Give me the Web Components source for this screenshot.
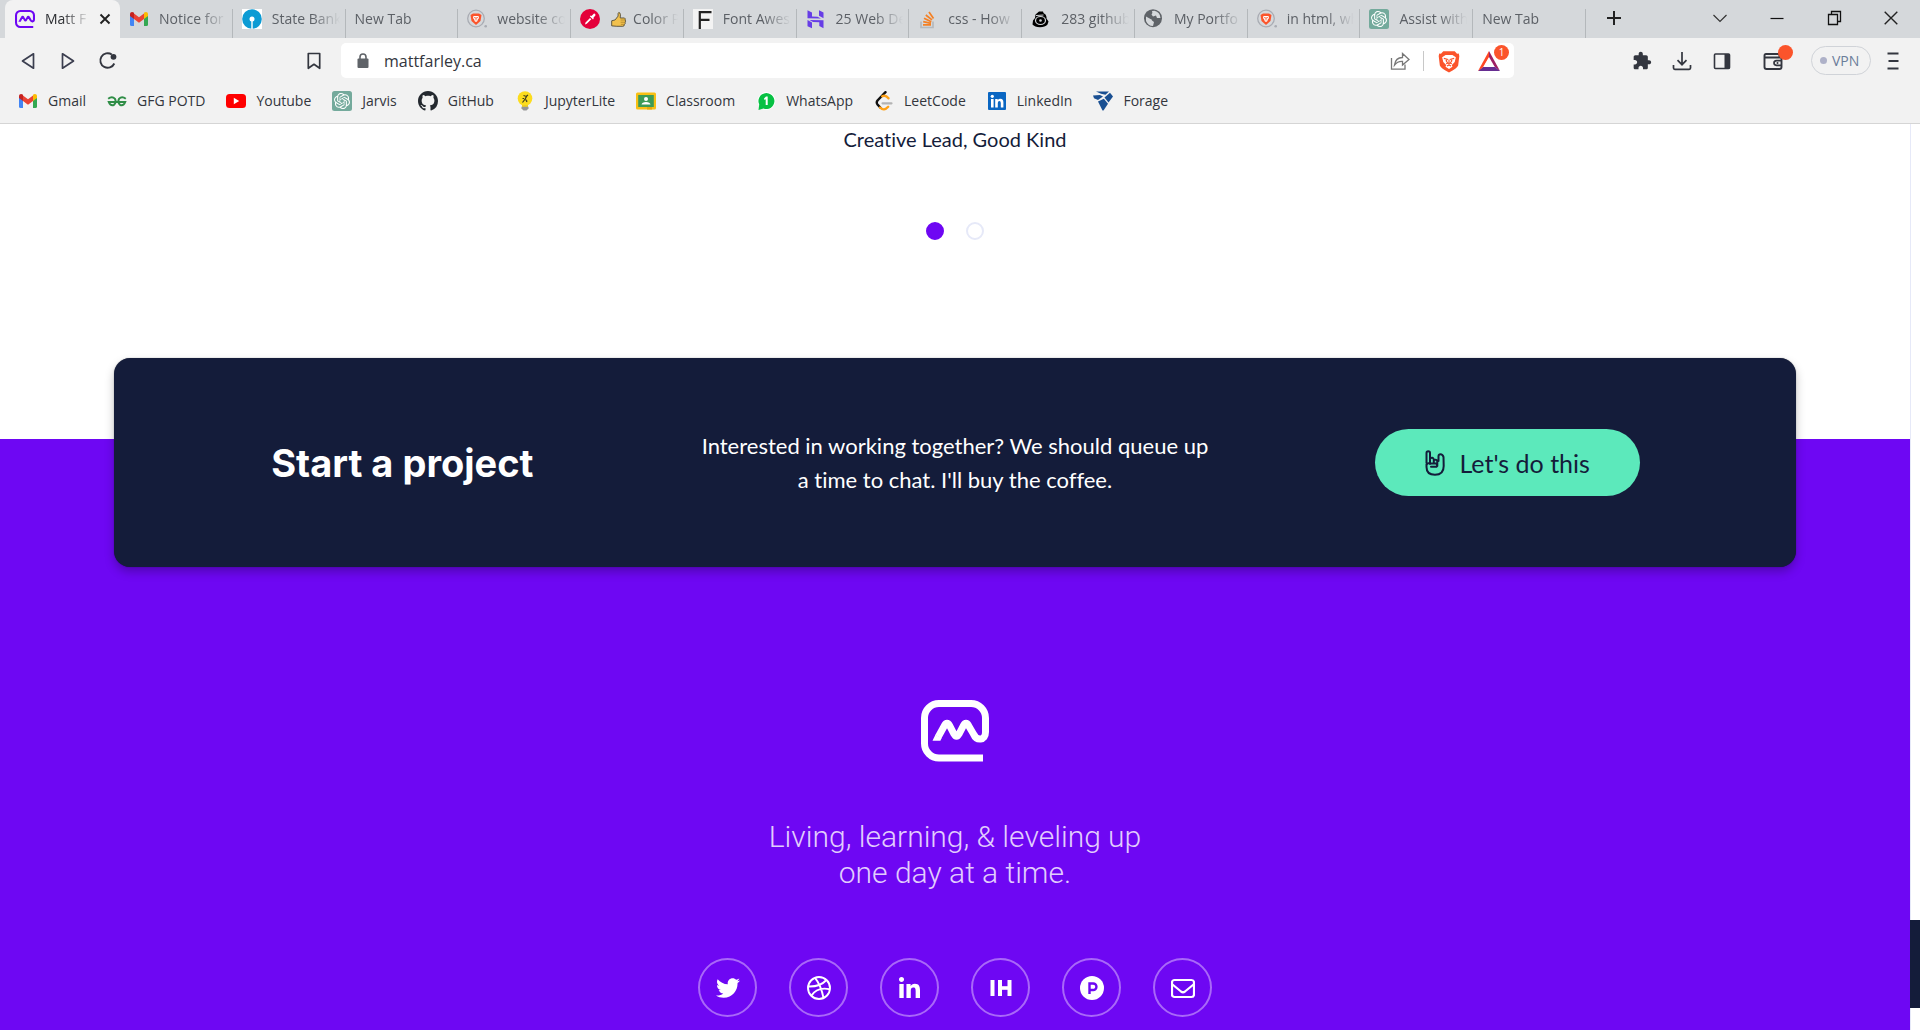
<!DOCTYPE html>
<html lang="en">
<head>
<meta charset="utf-8">
<title>Matt Farley</title>
<style>
  body { margin: 0; background: #fff; font-family: "Open Sans", "Noto Sans", sans-serif; }
</style>
</head>
<body>
<browser-window>
  <tab-strip slot="chrome">
    <browser-tab icon="matt" active>Matt F</browser-tab>
    <browser-tab icon="gmail">Notice for</browser-tab>
    <browser-tab icon="sbi">State Bank</browser-tab>
    <browser-tab>New Tab</browser-tab>
    <browser-tab icon="bravesearch">website co</browser-tab>
    <browser-tab icon="picker" emoji="thumb">Color P</browser-tab>
    <browser-tab icon="fontawesome">Font Awes</browser-tab>
    <browser-tab icon="hostinger">25 Web De</browser-tab>
    <browser-tab icon="stack">css - How</browser-tab>
    <browser-tab icon="eye">283 github</browser-tab>
    <browser-tab icon="globe">My Portfo</browser-tab>
    <browser-tab icon="bravesearch">in html, wh</browser-tab>
    <browser-tab icon="openai">Assist with</browser-tab>
    <browser-tab>New Tab</browser-tab>
  </tab-strip>
  <address-bar slot="chrome" url="mattfarley.ca"></address-bar>
  <bookmark-bar slot="chrome">
    <bookmark-link icon="gmail">Gmail</bookmark-link>
    <bookmark-link icon="gfg">GFG POTD</bookmark-link>
    <bookmark-link icon="youtube">Youtube</bookmark-link>
    <bookmark-link icon="openai">Jarvis</bookmark-link>
    <bookmark-link icon="github">GitHub</bookmark-link>
    <bookmark-link icon="bulb">JupyterLite</bookmark-link>
    <bookmark-link icon="classroom">Classroom</bookmark-link>
    <bookmark-link icon="whatsapp">WhatsApp</bookmark-link>
    <bookmark-link icon="leetcode">LeetCode</bookmark-link>
    <bookmark-link icon="linkedinbox">LinkedIn</bookmark-link>
    <bookmark-link icon="forage">Forage</bookmark-link>
  </bookmark-bar>
  <testimonial-end>Creative Lead, Good Kind</testimonial-end>
  <site-footer>
    <project-card slot="card">
      <span slot="title">Start a project</span>
      <span slot="text">Interested in working together? We should queue up<br>a time to chat. I'll buy the coffee.</span>
      <span slot="action">Let's do this</span>
    </project-card>
    <span slot="tagline">Living, learning, &amp; leveling up<br>one day at a time.</span>
    <social-link slot="social" icon="twitter" label="Twitter"></social-link>
    <social-link slot="social" icon="dribbble" label="Dribbble"></social-link>
    <social-link slot="social" icon="linkedin" label="LinkedIn"></social-link>
    <social-link slot="social" icon="indie" label="Indie Hackers"></social-link>
    <social-link slot="social" icon="product" label="Product Hunt"></social-link>
    <social-link slot="social" icon="mail" label="Email"></social-link>
  </site-footer>
</browser-window>

<script>
const MATT = '<path d="M62 58H18A14.500 14.500 0 0 1 3.500 43.500V18A14.500 14.500 0 0 1 18 3.500H50A14.500 14.500 0 0 1 64.500 18V32C64.500 41 55.500 41 52.500 34L47.500 25.500C46 22.500 44 22.500 42.500 25.500L38 34C36.500 37 34.500 37 33 34L28.500 25.500C27 22.500 25 22.500 23.500 25.500L17.300 36.700" fill="none" stroke="currentColor" stroke-width="7"/><path d="M14.400 34.700L20.600 38L19.400 40.700H11.500Z" fill="currentColor"/>';
const LION = '<path d="M5 2H15L17 4L18.500 3.800L19 6L18 14Q17 16.500 10 20Q3 16.500 2 14L1 6L1.500 3.800L3 4Z" fill="#fb542b"/><path d="M7 5H13L16 7L15 11L12.500 13.500L13 15L10 17L7 15L7.500 13.500L5 11L4 7Z" fill="#fff"/><path d="M5.500 8L8.500 8.700L7.500 10L9 12L7.500 12.500M14.500 8L11.500 8.700L12.500 10L11 12L12.500 12.500M10 9V13M8.200 14.500L10 13.500L11.800 14.500" fill="none" stroke="#fb542b" stroke-width="1"/>';
// Each entry is [viewBox, markup].
const ICONS = {
  matt: ['0 0 68 62', MATT],
  gmail: ['0 0 20 20', '<path d="M1 5V15.500Q1 17 2.500 17H5V9Z" fill="#4285f4"/><path d="M19 5V15.500Q19 17 17.500 17H15V9Z" fill="#34a853"/><path d="M5 10V4.500L10 8.300L15 4.500V10L10 13.800Z" fill="#ea4335"/><path d="M1 7V5.300C1 3 3.300 2.500 5 3.800V10Z" fill="#c5221f"/><path d="M19 7V5.300C19 3 16.700 2.500 15 3.800V10Z" fill="#fbbc04"/>'],
  sbi: ['0 0 20 20', '<path d="M0 0H20V20H0Z" fill="#fff"/><circle cx="10" cy="10" r="9.800" fill="#0c9bd4"/><circle cx="10" cy="10" r="2.500" fill="#fff"/><path d="M9.300 10H10.700V20H9.300Z" fill="#fff"/>'],
  bravesearch: ['0 0 20 20', '<circle cx="9" cy="9.500" r="8.300" fill="none" stroke="#a9acb3" stroke-width="1.300"/><circle cx="18.700" cy="17.300" r="1.300" fill="#a9acb3"/><path d="M6 4.500H12L14.500 6L13.500 12L9 16L4.500 12L3.500 6Z" fill="#fb542b"/><path d="M6.500 7H11.500L12 9L10.500 11V12L9 13L7.500 12V11L6 9Z" fill="#fff"/><path d="M7 8.500L9 9L11 8.500M9 9V11.500" stroke="#fb542b" stroke-width=".8" fill="none"/>'],
  picker: ['0 0 20 20', '<circle cx="10" cy="10" r="10" fill="#e4003a"/><path d="M5 15.500L5.500 13.500L10 9L11.300 10.300L6.800 14.800Z M9.800 7.300L13 10.500L13.800 9.500L13.300 9L15.500 6.300Q15.600 4.500 14 4.600L11.500 6.900L10.800 6.400Z" fill="#fff"/>'],
  thumb: ['0 0 20 20', '<path d="M2 11.500L6 10.500L9.500 6L9.500 3Q10 1 11.500 2.200Q12.800 3.500 12 8.200H17Q18.500 9 17.800 10.500Q19 12 17.800 13.200Q18.300 15 17 15.800Q17 18 15 18H8L2 17.500Z" fill="#f2c14d" stroke="#4a4433" stroke-width="1"/><path d="M12.500 10.600H17.500M12.500 13.200H17.500M12.800 15.700H16.500" stroke="#a37a24" stroke-width=".8"/>'],
  fontawesome: ['0 0 20 20', '<path d="M0 0H20V20H0Z" fill="#f3f3f3"/><path d="M6.800 20V3.200H18.500M6.800 10.800H16.500" fill="none" stroke="#222" stroke-width="2.200"/>'],
  hostinger: ['0 0 20 20', '<g fill="#673de6"><path d="M1.500 9.200V1.300L6 3.500V7.500L11.500 7.700L15 9.600Z"/><path d="M13 6.800V1.200L17.500 3.500V9.200Z"/><path d="M1.500 17.300V11L6 13.500V19.200Z"/><path d="M17.500 11.200V19.200L13.300 17V13.200L7 13.100L3.500 11Z"/></g>'],
  stack: ['0 0 20 20', '<path d="M3 12.500V18.500H15V12.500" fill="none" stroke="#b5b9bd" stroke-width="1.700"/><path d="M5 15.800H13M5.200 12.700L13 14.300M6 9.300L13.300 12.700M7.800 6L14 10.900M11 3L15.500 9.500" stroke="#f48024" stroke-width="1.700"/>'],
  eye: ['0 0 20 20', '<path d="M4.500 5.500L8 2.500L12 2.500L12.500 4Q15.500 5.500 15.500 8L15.500 9.500L17.500 12.500L16.500 15.500Q14 18.200 9 18.200Q3.500 18 1.500 15.500L2 11.500L4 9Z" fill="#000"/><ellipse cx="9.500" cy="11.500" rx="5" ry="4" fill="none" stroke="#d5d8db" stroke-width="1.200"/><circle cx="9.500" cy="11.500" r="1.300" fill="#d5d8db"/><path d="M5 6.500L12.500 6" stroke="#d5d8db"/>'],
  globe: ['0 0 20 20', '<circle cx="9" cy="9.200" r="9" fill="#5f6368"/><path d="M2 7.500L6.500 10Q8 10 8 11.500L10 13L9 17Q4 17 2 12Z M8 2Q9 4 7.500 5.500L9 7.500L12 6.500L13 9H16.500Q16 3 10.500 1.800Z" fill="#d5d8db"/>'],
  openai: ['0 0 20 20', '<rect width="20" height="20" rx="2.500" fill="#74aa9c"/><path transform="translate(2 2) scale(.667)" fill="#fff" d="M22.2819 9.8211a5.9847 5.9847 0 0 0-.5157-4.9108 6.0462 6.0462 0 0 0-6.5098-2.9A6.0651 6.0651 0 0 0 4.9807 4.1818a5.9847 5.9847 0 0 0-3.9977 2.9 6.0462 6.0462 0 0 0 .7427 7.0966 5.98 5.98 0 0 0 .511 4.9107 6.051 6.051 0 0 0 6.5146 2.9001A5.9847 5.9847 0 0 0 13.2599 24a6.0557 6.0557 0 0 0 5.7718-4.2058 5.9894 5.9894 0 0 0 3.9977-2.9001 6.0557 6.0557 0 0 0-.7475-7.0729zm-9.022 12.6081a4.4755 4.4755 0 0 1-2.8764-1.0408l.1419-.0804 4.7783-2.7582a.7948.7948 0 0 0 .3927-.6813v-6.7369l2.02 1.1686a.071.071 0 0 1 .038.052v5.5826a4.504 4.504 0 0 1-4.4945 4.4944zm-9.6607-4.1254a4.4708 4.4708 0 0 1-.5346-3.0137l.142.0852 4.783 2.7582a.7712.7712 0 0 0 .7806 0l5.8428-3.3685v2.3324a.0804.0804 0 0 1-.0332.0615L9.74 19.9502a4.4992 4.4992 0 0 1-6.1408-1.6464zM2.3408 7.8956a4.485 4.485 0 0 1 2.3655-1.9728V11.6a.7664.7664 0 0 0 .3879.6765l5.8144 3.3543-2.0201 1.1685a.0757.0757 0 0 1-.071 0l-4.8303-2.7865A4.504 4.504 0 0 1 2.3408 7.872zm16.5963 3.8558L13.1038 8.364 15.1192 7.2a.0757.0757 0 0 1 .071 0l4.8303 2.7913a4.4944 4.4944 0 0 1-.6765 8.1042v-5.6772a.79.79 0 0 0-.407-.667zm2.0107-3.0231l-.142-.0852-4.7735-2.7818a.7759.7759 0 0 0-.7854 0L9.409 9.2297V6.8974a.0662.0662 0 0 1 .0284-.0615l4.8303-2.7866a4.4992 4.4992 0 0 1 6.6802 4.66zM8.3065 12.863l-2.02-1.1638a.0804.0804 0 0 1-.038-.0567V6.0742a4.4992 4.4992 0 0 1 7.3757-3.4537l-.142.0805L8.704 5.459a.7948.7948 0 0 0-.3927.6813zm1.0976-2.3654l2.602-1.4998 2.6069 1.4998v2.9994l-2.5974 1.4997-2.6067-1.4997Z"/>'],
  gfg: ['0 0 20 20', '<path d="M1.200 7.700Q5 4.800 7.800 7.600Q10 11.500 6.800 14Q3.300 15 1.800 11H18.200Q16.700 15 13.200 14Q10 11.500 12.200 7.600Q15 4.800 18.800 7.700" fill="none" stroke="#2f8d46" stroke-width="2"/>'],
  youtube: ['0 0 20 20', '<rect y="3" width="20" height="14" rx="3.500" fill="#f00"/><path d="M7.800 6.800L13.200 10L7.800 13.200Z" fill="#fff"/>'],
  github: ['0 0 16 16', '<path fill="#24292f" d="M8 0C3.580 0 0 3.580 0 8c0 3.540 2.290 6.530 5.470 7.590.4.070.55-.17.55-.38 0-.19-.01-.82-.01-1.490-2.010.37-2.530-.49-2.690-.94-.09-.23-.48-.94-.82-1.130-.28-.15-.68-.52-.01-.53.63-.01 1.080.58 1.230.82.72 1.210 1.870.87 2.330.66.070-.52.28-.87.51-1.070-1.780-.2-3.640-.89-3.640-3.950 0-.87.31-1.590.82-2.150-.08-.2-.36-1.020.08-2.120 0 0 .67-.21 2.200.82.64-.18 1.320-.27 2-.27s1.360.09 2 .27c1.530-1.040 2.200-.82 2.200-.82.44 1.100.16 1.920.08 2.120.51.56.82 1.270.82 2.150 0 3.070-1.870 3.750-3.650 3.950.29.25.54.73.54 1.480 0 1.070-.01 1.930-.01 2.200 0 .21.15.46.55.38A8.010 8.010 0 0 0 16 8c0-4.420-3.580-8-8-8z"/>'],
  bulb: ['0 0 20 20', '<circle cx="10" cy="7.500" r="7.300" fill="#fcdc1e"/><path d="M7 14H13V16H7Z" fill="#f0cf20"/><path d="M6.500 15.800H13.500V17.500L11.500 19.500H8.500L6.500 17.500Z" fill="#969696"/><path d="M8.500 4.500L11.500 5.500L9.800 8.500L12 9.500M12 9.500L11.500 11M9.800 8.500L7.500 11.500M11.500 5L13 4M7.500 7.500L9 7.500" fill="none" stroke="#3c3a20" stroke-width="1.200"/>'],
  classroom: ['0 0 20 20', '<rect y="1.500" width="20" height="17" rx="1.500" fill="#f8c013"/><rect x="2.200" y="4" width="15.600" height="12" fill="#3d9b57"/><circle cx="10" cy="8" r="2" fill="#fff"/><path d="M5.500 13.500Q6 11 10 11Q14 11 14.500 13.500Z" fill="#fff"/><path d="M11 16H16V18.500H11Z" fill="#e5a90b"/>'],
  whatsapp: ['0 0 20 20', '<circle cx="10.500" cy="10" r="9" fill="#fff"/><path d="M2.500 19L3.200 13.500A8 8 0 1 1 7.500 17.500Z" fill="#07c143"/><path d="M8 7.500L10 5.500H11.700V14H9.700V8.200L8.500 9Z" fill="#fff"/>'],
  leetcode: ['0 0 20 20', '<path d="M11.500 1.200L3.500 9.500Q2 11.500 3.500 13.500L6.500 16.700" fill="none" stroke="#111" stroke-width="2.400" stroke-linecap="round"/><path d="M6 16.500Q10 20.500 14.200 15.800M8.200 5.200Q11.500 3.500 14.500 7.300" fill="none" stroke="#ffa116" stroke-width="2.400" stroke-linecap="round"/><path d="M8.500 12.300H17.500" stroke="#b3b3b3" stroke-width="2.200" stroke-linecap="round"/>'],
  linkedinbox: ['0 0 20 20', '<rect x="1" y="1" width="18" height="18" rx="1" fill="#0a66c2"/><circle cx="5.300" cy="5.300" r="1.600" fill="#fff"/><path d="M4 8H6.600V16.500H4ZM8.200 8H10.700V9.200Q11.500 7.800 13.500 7.800Q16.400 7.800 16.400 11.500V16.500H13.800V12Q13.800 10 12.400 10Q10.800 10 10.800 12V16.500H8.200Z" fill="#fff"/>'],
  forage: ['0 0 20 20', '<g fill="#194f92"><path d="M3 .5H16L12.500 3.700L8 2.800Z"/><path d="M0 4.500L7 3.900L10 5.500L5 9L1 7.300Z"/><path d="M17 1.800L20 5.500L15.500 11.500L11.500 6.500Z"/><path d="M5 10.500L10.800 7.800L15 12.800L10.500 19.500H9.500Z"/></g>'],
  back: ['0 0 20 20', '<path d="M15.500 2.800V17.200L4.500 10Z" fill="none" stroke="#3b3e4f" stroke-width="1.700" stroke-linejoin="round"/>'],
  forward: ['0 0 20 20', '<path d="M4.500 2.800V17.200L15.500 10Z" fill="none" stroke="#3b3e4f" stroke-width="1.700" stroke-linejoin="round"/>'],
  reload: ['0 0 20 20', '<path d="M13.800 3.500A7.300 7.300 0 1 0 16.300 12.500" fill="none" stroke="#33363f" stroke-width="1.900"/><circle cx="15.500" cy="5.800" r="2.900" fill="#33363f"/>'],
  bookmark: ['0 0 20 20', '<path d="M4.300 2.500H15.700V17.300L10 13.300L4.300 17.300Z" fill="none" stroke="#33363f" stroke-width="1.700" stroke-linejoin="round"/>'],
  lock: ['0 0 20 20', '<rect x="4.500" y="7.500" width="11" height="9.500" rx="1" fill="#5f6368"/><path d="M7 8V6A3 3 0 0 1 13 6V8" fill="none" stroke="#5f6368" stroke-width="1.600"/>'],
  share: ['0 0 20 20', '<path d="M1.500 7V18.200H15V13.500" fill="none" stroke="#777" stroke-width="1.300"/><path d="M4.500 14Q5.500 6.500 12.500 6.500V2.500L19 8.500L12.500 14V10.300Q7.500 10 4.500 14Z" fill="none" stroke="#777" stroke-width="1.300"/>'],
  brave: ['0 0 20 22', '<g transform="translate(-.5 0) scale(1.050 1.080)">' + LION + '</g>'],
  bat: ['0 0 22 20', '<path d="M11 0L22 20L11 11.500Z" fill="#9e1f63"/><path d="M0 20H22L16.500 15.500H5.500Z" fill="#662d91"/><path d="M11 0V6.500L5.500 16L0 20Z" fill="#ff4724"/><path d="M11 6L16.800 16H5.200Z" fill="#fff"/>'],
  puzzle: ['0 0 24 24', '<path fill="#33363f" d="M20.500 11H19V7c0-1.100-.9-2-2-2h-4V3.500C13 2.120 11.880 1 10.500 1S8 2.120 8 3.500V5H4c-1.100 0-1.990.9-1.990 2v3.800H3.500c1.490 0 2.700 1.210 2.700 2.700s-1.210 2.700-2.700 2.700H2V20c0 1.100.9 2 2 2h3.800v-1.500c0-1.490 1.210-2.700 2.700-2.700 1.490 0 2.700 1.210 2.700 2.700V22H17c1.100 0 2-.9 2-2v-4h1.500c1.380 0 2.500-1.120 2.500-2.500S21.880 11 20.500 11z"/>'],
  download: ['0 0 20 20', '<path d="M10 1V13.500M5.500 9.200L10 13.700L14.500 9.200M1.500 14V17Q1.500 18.300 2.800 18.300H17.200Q18.500 18.300 18.500 17V14" fill="none" stroke="#33363f" stroke-width="1.700"/>'],
  panel: ['0 0 20 20', '<rect x="2.500" y="3" width="15" height="14.500" rx="1" fill="none" stroke="#33363f" stroke-width="1.600"/><path d="M12.500 3H18V17.500H12.500Z" fill="#33363f"/>'],
  wallet: ['0 0 20 20', '<path d="M16.500 6.500V4.500Q16.500 3 15 3H3Q1.500 3 1.500 4.500V16Q1.500 18 3.500 18H16.500Q18.500 18 18.500 16V6.500H2" fill="none" stroke="#33363f" stroke-width="1.900"/><path d="M19 9.700H13.500Q11 9.900 11 12Q11 14.100 13.500 14.300H19" fill="none" stroke="#33363f" stroke-width="1.700"/><circle cx="14.500" cy="12" r="1" fill="#33363f"/>'],
  menu: ['0 0 20 20', '<path d="M4.500 2.500H15.500M5.500 10H15.500M4.500 17.500H15.500" stroke="#33363f" stroke-width="1.900"/>'],
  plus: ['0 0 20 20', '<path d="M10 3V17M3 10H17" stroke="#222" stroke-width="2"/>'],
  chevron: ['0 0 20 20', '<path d="M3.500 7L10 13.500L16.500 7" fill="none" stroke="#333" stroke-width="1.200"/>'],
  minimise: ['0 0 20 20', '<path d="M3.500 10.500H16.500" stroke="#111" stroke-width="1.200"/>'],
  restore: ['0 0 20 20', '<path d="M4.500 6.500H13.500V16.500H4.500ZM7.500 6V3.500H16.500V13.500H14" fill="none" stroke="#111" stroke-width="1.300"/>'],
  close: ['0 0 20 20', '<path d="M3.700 3.700L16.300 16.300M16.300 3.700L3.700 16.300" stroke="#222" stroke-width="1.400"/>'],
  tabclose: ['0 0 20 20', '<path d="M5.500 5.500L14.500 14.500M14.500 5.500L5.500 14.500" stroke="#222" stroke-width="1.900"/>'],
  horns: ['0 0 20 26', '<path d="M1.500 13V3Q1.500 1.200 3.200 1.200Q5 1.200 5 3V10.500M5 8.500Q7.800 6.500 8.800 9.500V11M9 10Q11.700 9 12.300 11.500V16M13.500 11V6Q13.700 4.200 15.400 4.200Q17.800 4.200 18.500 7L18.700 16Q18.700 24.800 10 24.800Q1.500 24.800 1.500 17V14.500Q4 12 6 13.500H11Q13 14.500 11.500 16.800H6M5 10V14M8.800 11V13.500" fill="none" stroke="#141c3a" stroke-width="2" stroke-linecap="round"/>'],
  twitter: ['0 0 512 512', '<path fill="#fff" d="M459.370 151.716c.325 4.548.325 9.097.325 13.645 0 138.720-105.583 298.558-298.558 298.558-59.452 0-114.680-17.219-161.137-47.106 8.447.974 16.568 1.299 25.340 1.299 49.055 0 94.213-16.568 130.274-44.832-46.132-.975-84.792-31.188-98.112-72.772 6.498.974 12.995 1.624 19.818 1.624 9.421 0 18.843-1.300 27.614-3.573-48.081-9.747-84.143-51.980-84.143-102.985v-1.299c13.969 7.797 30.214 12.670 47.431 13.319-28.264-18.843-46.781-51.005-46.781-87.391 0-19.492 5.197-37.360 14.294-52.954 51.655 63.675 129.300 105.258 216.365 109.807-1.624-7.797-2.599-15.918-2.599-24.040 0-57.828 46.782-104.934 104.934-104.934 30.213 0 57.502 12.670 76.670 33.137 23.715-4.548 46.456-13.320 66.599-25.340-7.798 24.366-24.366 44.833-46.132 57.827 21.117-2.273 41.584-8.122 60.426-16.243-14.292 20.791-32.161 39.308-52.628 54.253z"/>'],
  dribbble: ['0 0 24 24', '<g fill="none" stroke="#fff" stroke-width="1.900"><circle cx="12" cy="12" r="11"/><path d="M8 1.800Q14 9 16.500 22M1.200 10.500Q13 11 19.500 4M4.300 19.800Q10 10.500 22.800 13.200"/></g>'],
  linkedin: ['0 0 448 448', '<path fill="#fff" d="M100.280 448H7.400V148.900h92.880zM53.790 108.100C24.090 108.100 0 83.500 0 53.800a53.790 53.790 0 0 1 107.580 0c0 29.700-24.100 54.300-53.790 54.300zM447.900 448h-92.680V302.400c0-34.700-.7-79.200-48.290-79.200-48.290 0-55.690 37.700-55.690 76.700V448h-92.780V148.900h89.080v40.800h1.300c12.400-23.500 42.690-48.300 87.880-48.300 94 0 111.280 61.900 111.280 142.300V448z"/>'],
  indie: ['0 0 24 24', '<g fill="#fff"><rect x="1.500" y="4" width="4" height="16"/><rect x="9" y="4" width="4" height="16"/><rect x="18.500" y="4" width="4" height="16"/><rect x="12" y="10.200" width="7" height="3.600"/></g>'],
  product: ['0 0 24 24', '<circle cx="12" cy="12" r="12" fill="#fff"/><path d="M9.500 18V7.500H13.200A3.200 3.200 0 0 1 13.200 14H9.500" fill="none" stroke="#6e07f3" stroke-width="2.400"/>'],
  mail: ['0 0 24 24', '<rect x="1" y="4" width="22" height="17" rx="2.500" fill="none" stroke="#fff" stroke-width="2.200"/><path d="M1.500 8.500L10 15.500Q12 17 14 15.500L22.500 8.500" fill="none" stroke="#fff" stroke-width="2.200"/>']
};

// Base class: puts styles and markup into an open shadow root.
class Part extends HTMLElement {
  connectedCallback() {
    if (this.shadowRoot) return;
    this.attachShadow({ mode: 'open' }).innerHTML = '<style>*{box-sizing:border-box}' + this.css() + '</style>' + this.html();
  }
}

customElements.define('ui-icon', class extends Part {
  css() { return ':host{display:block;flex:none;width:20px;height:20px}svg{display:block;width:100%;height:100%}'; }
  html() {
    const [box, body] = ICONS[this.getAttribute('name')];
    return `<svg viewBox="${box}" aria-hidden="true">${body}</svg>`;
  }
});

customElements.define('icon-button', class extends Part {
  css() { return `:host{display:block;flex:none;width:40px;height:36px}
    button{display:flex;align-items:center;justify-content:center;width:100%;height:100%;padding:0;border:0;background:none}
    .brave{width:22px;height:24px}`; }
  html() { const i = this.getAttribute('icon'); return `<button type="button" aria-label="${this.getAttribute('label')}"><ui-icon class="${i}" name="${i}"></ui-icon></button>`; }
});

customElements.define('browser-window', class extends Part {
  css() { return `:host{display:flex;flex-direction:column;height:100vh;overflow:hidden}
    header{flex:none;background:#f2f2f2;border-bottom:1px solid #d5d5d5}
    .view{flex:1;min-height:0;display:flex}
    main{flex:1;min-width:0;overflow:hidden}
    .scroll{flex:none;width:10px;display:flex;flex-direction:column;justify-content:flex-end;padding-bottom:22px;background:#fff;box-shadow:inset 1px 0 #e6e9f8}
    .thumb{height:88px;background:#141c3a}`; }
  html() { return `<header><slot name="chrome"></slot></header>
    <div class="view"><main><slot></slot></main><div class="scroll"><div class="thumb"></div></div></div>`; }
});

customElements.define('tab-strip', class extends Part {
  css() { return `:host{display:flex;height:38px;background:#d5d8db;padding:0 1px 0 5px}
    .tabs{display:flex;flex:0 1 1581px;min-width:0}
    .new{width:55px}
    .controls{display:flex;margin-left:auto}
    .controls icon-button{width:57px}`; }
  html() { return `<div class="tabs" role="tablist"><slot></slot></div>
    <icon-button class="new" icon="plus" label="New tab"></icon-button>
    <div class="controls">
      <icon-button icon="chevron" label="Search tabs"></icon-button>
      <icon-button icon="minimise" label="Minimise"></icon-button>
      <icon-button icon="restore" label="Restore"></icon-button>
      <icon-button icon="close" label="Close"></icon-button>
    </div>`; }
});

customElements.define('browser-tab', class extends Part {
  css() { return `:host{display:block;flex:1 1 0;min-width:0;height:38px;color:#5c6066;box-sizing:border-box}
    :host([active]){flex:0 0 115px;color:#2a2c30}
    .tab{display:flex;align-items:center;height:38px}
    :host([active]) .tab{background:#f2f2f2;border-radius:8px 8px 0 0;padding-right:5px}
    .pick{display:flex;align-items:center;gap:10px;flex:1;min-width:0;height:29px;margin-top:9px;padding:0 5px 9px 9px;border:0;border-right:1px solid #b4b8bb;background:none;color:inherit;text-align:left;font:14px/20px "Open Sans","Noto Sans",sans-serif}
    :host([active]) .pick{border-right:0;padding-left:10px}
    .matt{color:#6e07f3}
    .thumb{width:17px;height:17px;margin-right:-4px}
    .text{flex:1;min-width:0;overflow:hidden;white-space:nowrap;-webkit-mask-image:linear-gradient(90deg,#000 calc(100% - 28px),transparent);mask-image:linear-gradient(90deg,#000 calc(100% - 28px),transparent)}
    .x{width:20px;height:36px}`; }
  html() {
    const i = this.getAttribute('icon'), e = this.getAttribute('emoji'), a = this.hasAttribute('active');
    return `<div class="tab"><button class="pick" role="tab" aria-selected="${a}">${i ? `<ui-icon class="${i}" name="${i}"></ui-icon>` : ''}${e ? `<ui-icon class="thumb" name="${e}"></ui-icon>` : ''}<span class="text"><slot></slot></span></button>${a ? '<icon-button class="x" icon="tabclose" label="Close tab"></icon-button>' : ''}</div>`;
  }
});

customElements.define('address-bar', class extends Part {
  css() { return `:host{display:flex;align-items:center;height:45px;padding:0 13px 0 8px}
    .mark{width:32px;margin-left:170px}
    form{display:flex;align-items:center;flex:1;min-width:0;height:35px;margin:0 108px 0 11px;padding:0 4px 0 12px;background:#fff;border-radius:5px}
    input{flex:1;min-width:0;height:30px;margin-left:11px;padding:0;border:0;outline:0;background:none;color:#33363d;font:16px/24px "Open Sans","Noto Sans",sans-serif}
    form icon-button{width:32px}
    .line{width:1px;height:20px;margin:0 8px 0 7px;background:#c8c8c8}
    .badged{position:relative;display:flex;align-items:center;justify-content:center;width:42px;height:36px;flex:none;padding:0;border:0;background:none}
    .badged.bat{margin-left:2px}
    .badged.bat ui-icon{width:24px}
    .badge{position:absolute;top:2px;right:1px;width:15px;height:15px;border-radius:8px;background:#fb542b;color:#fff;font:10px/15px "Open Sans",sans-serif;text-align:center}
    form .lion{width:34px}
    .vpn{display:flex;align-items:center;gap:5px;width:60px;height:29px;margin:0 8px 0 17px;padding:0 0 0 8px;border:1px solid #d0d3d8;border-radius:15px;background:none;color:#6b7d9a;font:14px/20px "Open Sans","Noto Sans",sans-serif}
    .dot{width:7px;height:7px;border-radius:4px;background:#aeb1c8}
    .menu{width:28px}
    .wal{margin-left:10px}`; }
  html() { return `<icon-button icon="back" label="Back"></icon-button><icon-button icon="forward" label="Forward"></icon-button><icon-button icon="reload" label="Reload"></icon-button>
    <icon-button class="mark" icon="bookmark" label="Bookmark"></icon-button>
    <form><ui-icon name="lock"></ui-icon><input aria-label="Address" value="${this.getAttribute('url')}">
      <icon-button icon="share" label="Share"></icon-button><span class="line"></span>
      <icon-button class="lion" icon="brave" label="Shields"></icon-button>
      <button type="button" class="badged bat" aria-label="Rewards"><ui-icon name="bat"></ui-icon><span class="badge">1</span></button></form>
    <icon-button icon="puzzle" label="Extensions"></icon-button><icon-button icon="download" label="Downloads"></icon-button><icon-button icon="panel" label="Sidebar"></icon-button>
    <button class="badged wal" aria-label="Wallet"><ui-icon name="wallet"></ui-icon><span class="badge"></span></button>
    <button class="vpn"><span class="dot"></span>VPN</button>
    <icon-button class="menu" icon="menu" label="Menu"></icon-button>`; }
});

customElements.define('bookmark-bar', class extends Part {
  css() { return ':host{display:block}nav{display:flex;height:40px;gap:21px;padding:0 18px 4px}'; }
  html() { return '<nav aria-label="Bookmarks"><slot></slot></nav>'; }
});

customElements.define('bookmark-link', class extends Part {
  css() { return `:host{display:flex;flex:none}
    a{display:flex;align-items:center;gap:10px;color:#33363d;text-decoration:none;font:14px/20px "Open Sans","Noto Sans",sans-serif;white-space:nowrap}`; }
  html() { return `<a href="#"><ui-icon name="${this.getAttribute('icon')}"></ui-icon><slot></slot></a>`; }
});

customElements.define('testimonial-end', class extends Part {
  css() { return `:host{display:flex;flex-direction:column;align-items:center;height:315px;background:#fff;color:#141c3a}
    p{margin:0;font:20px/30px Lato,sans-serif;font-variant-ligatures:none}
    div{display:flex;gap:22px;margin-top:68px}
    button{width:18px;height:18px;padding:0;border:2px solid #e6e9f8;border-radius:50%;background:none}
    .on{background:#6e07f3;border-color:#6e07f3}`; }
  html() { return '<p><slot></slot></p><div><button class="on" aria-label="Slide 1"></button><button aria-label="Slide 2"></button></div>'; }
});

customElements.define('project-card', class extends Part {
  css() { return `:host{display:grid;grid-template-columns:repeat(3,1fr);align-items:center;justify-items:center;width:calc(100% - 228px);height:209px;margin-top:-81px;padding:0 12px;background:#141c3a;color:#fff;border-radius:16px;box-shadow:0 5px 10px rgba(0,0,0,.25),0 0 1px rgba(0,0,0,.5);box-sizing:border-box;text-align:center}
    h2{margin:0;font:700 38px/44px Inter,sans-serif}
    p{margin:0;font:22px/34px Lato,sans-serif;font-variant-ligatures:none;white-space:nowrap}
    button{display:flex;align-items:center;justify-content:center;gap:14px;width:265px;height:67px;padding:0;border:0;border-radius:34px;background:#5ce9bb;color:#141c3a;font:25px/34px Lato,sans-serif}
    ui-icon{height:26px}`; }
  html() { return '<h2><slot name="title"></slot></h2><p><slot name="text"></slot></p><button><ui-icon name="horns"></ui-icon><slot name="action"></slot></button>'; }
});

customElements.define('site-footer', class extends Part {
  css() { return `:host{display:flex;flex-direction:column;align-items:center;height:100%;background:#6e07f3;color:#fff}
    .logo{width:68px;height:62px;margin-top:133px}
    p{margin:57px 0 0;color:#e2cdfd;font:300 30px/36px Roboto,sans-serif;text-align:center}
    nav{display:flex;gap:32px;margin-top:67px}`; }
  html() { return '<slot name="card"></slot><ui-icon class="logo" name="matt"></ui-icon><p><slot name="tagline"></slot></p><nav aria-label="Social"><slot name="social"></slot></nav>'; }
});

customElements.define('social-link', class extends Part {
  css() { return `:host{display:block}
    a{display:flex;align-items:center;justify-content:center;width:59px;height:59px;border:2px solid #a968f8;border-radius:50%}
    ui-icon{width:24px;height:24px}
    .linkedin{width:21px;height:21px}`; }
  html() { const i = this.getAttribute('icon'); return `<a href="#" aria-label="${this.getAttribute('label')}"><ui-icon class="${i}" name="${i}"></ui-icon></a>`; }
});
</script>
</body>
</html>
